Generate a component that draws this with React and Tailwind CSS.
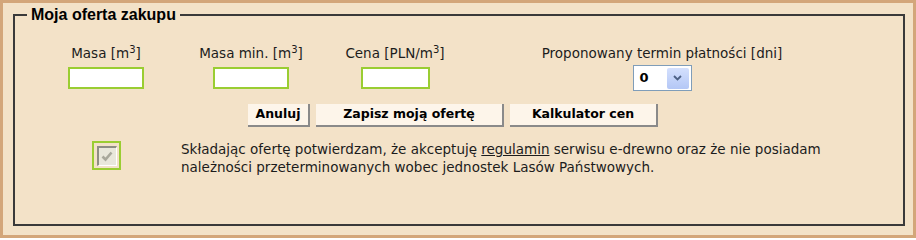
import React from 'react'

const FONT = { fontFamily: '"DejaVu Sans", Verdana, sans-serif' }

function Field({ label, sup, width, inputW }) {
  return (
    <div className={`flex flex-col items-center ${width}`}>
      <div className="h-[36px] flex items-end text-[13.5px] text-[#1c1c1c] whitespace-nowrap">
        <span>
          {label}
          {sup && <sup className="text-[10px]">3</sup>}
          {sup && ']'}
        </span>
      </div>
      <input className={`${inputW} h-[22px] mt-[4px] bg-white border-2 border-[#9acd32] outline-none`} />
    </div>
  )
}

function TermSelect() {
  return (
    <div className="flex items-center w-[59px] h-[26px] bg-white border border-[#7f9db9] pl-[6px] pr-[2px]">
      <span className="flex-1 text-[13px] font-bold text-black">0</span>
      <span className="w-[22px] h-[21px] rounded-[2px] bg-gradient-to-b from-[#d4e0fd] to-[#b4c7f6] flex items-center justify-center">
        <svg width="9" height="6" viewBox="0 0 9 6">
          <path d="M1 1 L4.5 4.5 L8 1" fill="none" stroke="#4d6185" strokeWidth="1.8" />
        </svg>
      </span>
    </div>
  )
}

function Btn({ children, w }) {
  return (
    <button className={`${w} h-[23px] bg-[#fdf5ea] border-r-2 border-b-2 border-[#8a8a8a] text-[12.5px] font-bold text-black leading-none`}>
      {children}
    </button>
  )
}

export default function App() {
  return (
    <div style={FONT} className="w-[916px] h-[238px] bg-[#f3e2c8] border-[3px] border-[#d3a67a] pl-[10px] pr-[8px] pt-0">
      <fieldset className="border-2 border-[#3a3a3a] h-[223px] px-[12px] pb-0">
        <legend className="px-[4px] text-[16px] font-bold text-black font-['Liberation_Sans',Arial,sans-serif]">Moja oferta zakupu</legend>
        <div className="-mx-[12px] flex">
          <Field label="Masa [m" sup width="w-[182px]" inputW="w-[76px]" />
          <Field label="Masa min. [m" sup width="w-[108px]" inputW="w-[76px]" />
          <Field label="Cena [PLN/m" sup width="w-[180px]" inputW="w-[69px]" />
          <div className="w-[354px] flex flex-col items-center">
            <div className="h-[36px] flex items-end text-[13.5px] text-[#1c1c1c] whitespace-nowrap">
              Proponowany termin płatności [dni]
            </div>
            <div className="mt-[2px]">
              <TermSelect />
            </div>
          </div>
        </div>
        <div className="-mx-[12px] mt-[13px] flex justify-center gap-[6px] pr-[12px]">
          <Btn w="w-[62px]">Anuluj</Btn>
          <Btn w="w-[188px]">Zapisz moją ofertę</Btn>
          <Btn w="w-[148px]">Kalkulator cen</Btn>
        </div>
        <div className="-mx-[12px] mt-[14px] flex items-start">
          <div className="w-[166px] flex pl-[77px]">
            <div className="w-[29px] h-[29px] border-2 border-[#9acd32] flex items-center justify-center">
              <div className="w-[20px] h-[20px] bg-[#e9e7db] border-t-2 border-l-2 border-[#8e8d84] border-r border-b border-r-white border-b-white flex items-center justify-center">
                <svg width="12" height="11" viewBox="0 0 12 11">
                  <path d="M1.5 5.5 L4.5 8.5 L10.5 1.5" fill="none" stroke="#a9a89c" strokeWidth="2.6" />
                </svg>
              </div>
            </div>
          </div>
          <p className="text-[13.5px] leading-[18px] text-[#1c1c1c] -mt-[1px]">
            Składając ofertę potwierdzam, że akceptuję <a className="underline">regulamin</a> serwisu e-drewno oraz że nie posiadam
            <br />
            należności przeterminowanych wobec jednostek Lasów Państwowych.
          </p>
        </div>
      </fieldset>
    </div>
  )
}
